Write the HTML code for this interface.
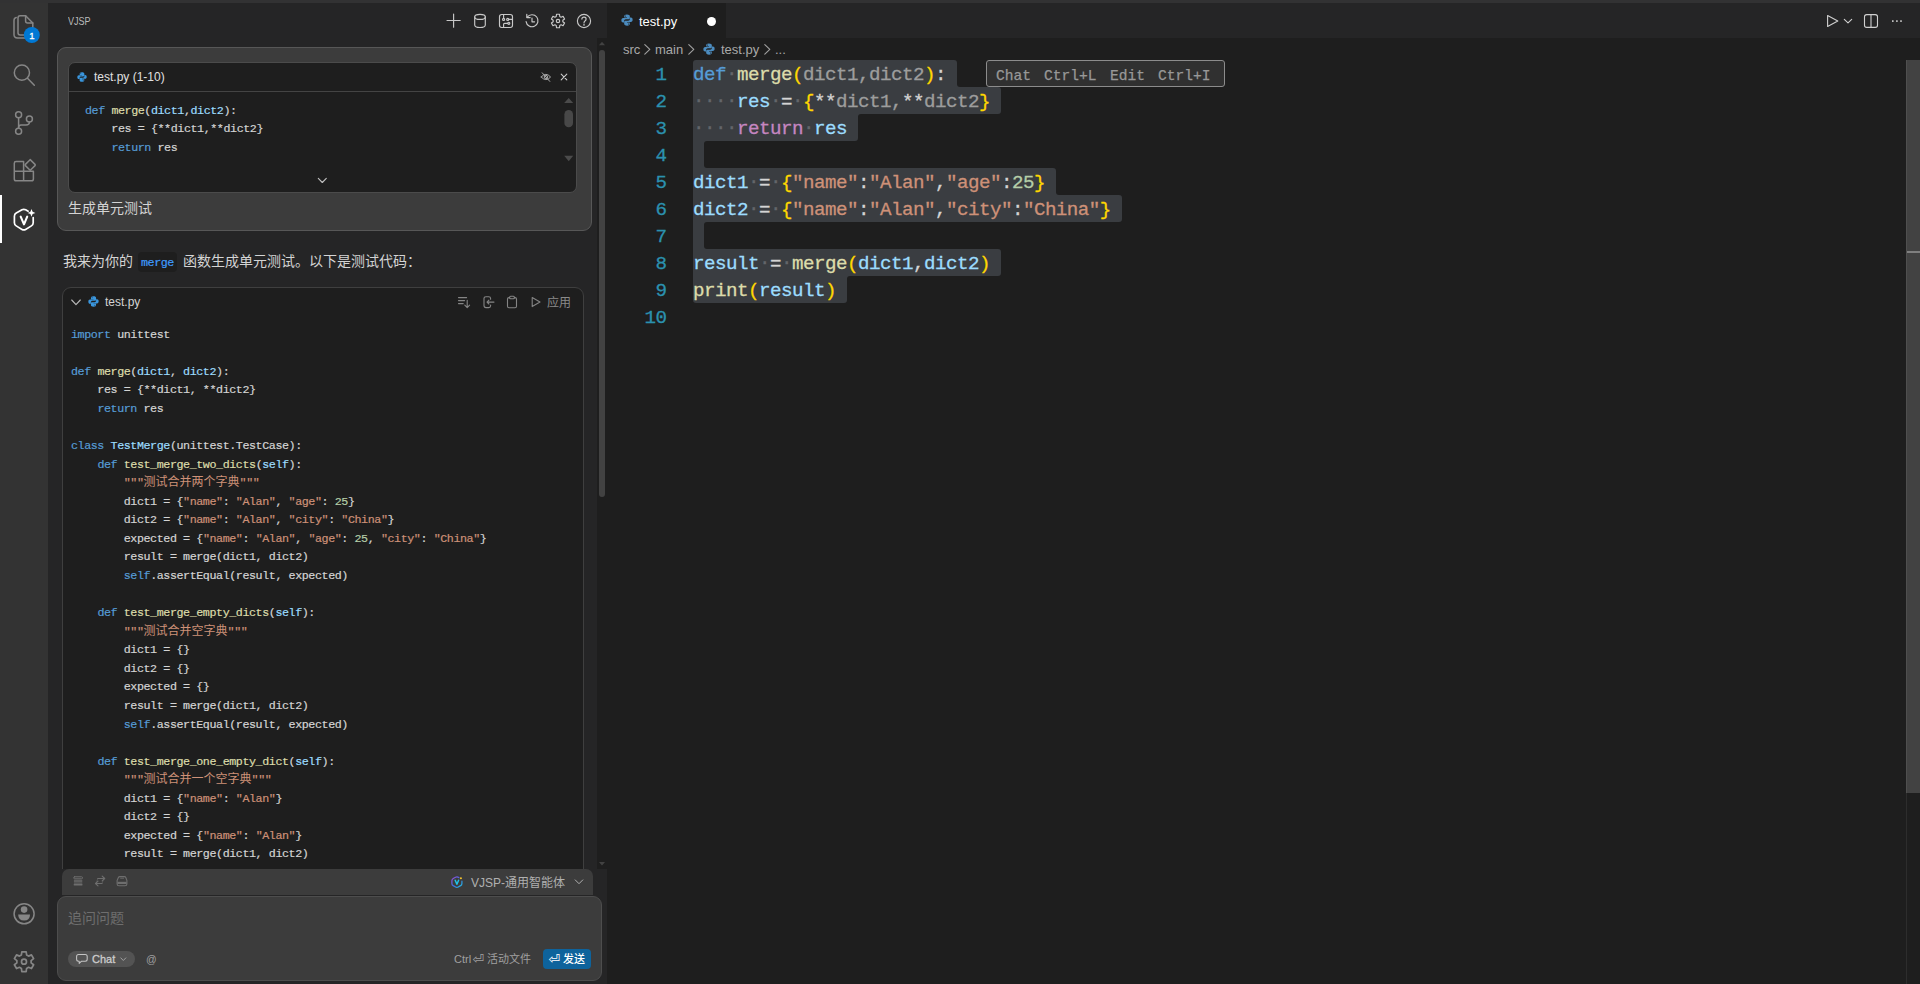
<!DOCTYPE html>
<html lang="zh-CN">
<head>
<meta charset="utf-8">
<title>test.py - VJSP</title>
<style>
*{box-sizing:border-box;margin:0;padding:0}
html,body{width:1920px;height:984px;overflow:hidden;background:#1e1e1e}
body{position:relative;font-family:"Liberation Sans","Noto Sans CJK SC",sans-serif;font-size:13px;color:#cccccc;-webkit-font-smoothing:antialiased}
.a{position:absolute}
svg{position:absolute;overflow:visible}
.t{position:absolute;white-space:pre;line-height:1}
/* frame */
#topstrip{left:0;top:0;width:1920px;height:3px;background:#323233}
#actbar{left:0;top:3px;width:48px;height:981px;background:#333333}
#side{left:48px;top:3px;width:559px;height:981px;background:#252526}
#tabs{left:607px;top:3px;width:1313px;height:35px;background:#252526}
#tab{left:607px;top:3px;width:119px;height:35px;background:#1e1e1e}
#activeind{left:0;top:195px;width:2px;height:48px;background:#ffffff}
/* editor */
.mono{font-family:"Liberation Mono","Noto Sans CJK SC",monospace}
#lnums{left:607px;top:61.5px;width:59.6px;text-align:right;color:#2b91af;font-size:19.2px;letter-spacing:-.52px;-webkit-text-stroke:.3px}
#edcode{left:693px;top:61.5px;font-size:19.2px;letter-spacing:-.52px;color:#d4d4d4;-webkit-text-stroke:.3px}
.el{height:27px;line-height:27px;white-space:pre}
.kw{color:#569cd6}.fn{color:#dcdcaa}.b1{color:#ffd700}.dim{color:#9d9d9d}.p{color:#d4d4d4}
.v{color:#9cdcfe}.ct{color:#c586c0}.s{color:#ce9178}.n{color:#b5cea8}.ws{color:#63666a;position:relative;top:-.1px}
#hint{left:986px;top:60px;width:239px;height:27px;border:1px solid #8c8c8c;border-radius:3px;background:#303030}
.hw{position:absolute;top:6.6px;font-size:14.6px;color:#989898;line-height:16px;-webkit-text-stroke:.25px}
#vscroll{left:1906px;top:60px;width:14px;height:733px;background:#424242}
#vline{left:1906px;top:60px;width:1px;height:924px;background:rgba(255,255,255,.07);z-index:3}
#vmark{left:1907px;top:251px;width:13px;height:2px;background:#7f7f7f}
/* sidebar */
#userbox{left:57px;top:47px;width:535px;height:184px;border:1px solid #575757;border-radius:9px;background:#3c3c3c}
#ctx{left:68px;top:62px;width:509px;height:131px;border:1px solid #4b4b4b;border-radius:7px;background:#1e1e1e}
#ctxsep{left:69px;top:91px;width:507px;height:1px;background:#444444}
.code12{font-size:11.7px;letter-spacing:-.42px;color:#d4d4d4;-webkit-text-stroke:.2px}
.cl{height:18.57px;line-height:18.57px;white-space:pre}
.cj{font-size:12px;letter-spacing:0;-webkit-text-stroke:0}
#strack{left:597px;top:38px;width:10px;height:831px;background:#1e1e1e}
#sthumb{left:599px;top:50px;width:6px;height:447px;background:#424242;border-radius:3px}
#pill{left:138px;top:252px;width:39px;height:20px;border-radius:4px;background:#1e1e1e}
#cblock{left:62px;top:287px;width:522px;height:600px;border:1px solid #3f3f3f;border-radius:9px;background:#1e1e1e}
#clip{left:48px;top:38px;width:559px;height:831px;overflow:hidden}
#tbar{left:62px;top:869px;width:531px;height:26px;background:#3c3c3c;border-radius:7px 7px 0 0}
#inbox{left:57px;top:896px;width:545px;height:85px;border:1px solid #4d4d4d;border-radius:9px;background:#3c3c3c}
#chatpill{left:68px;top:951px;width:67px;height:16px;border-radius:8px;background:#535353}
#send{left:543px;top:949px;width:48px;height:20px;border-radius:4px;background:#0e639c}
</style>
</head>
<body>
<div class="a" id="topstrip"></div>
<div class="a" id="actbar"></div>
<div class="a" id="side"></div>
<div class="a" id="tabs"></div>
<div class="a" id="tab"></div>
<div class="a" id="activeind"></div>

<!-- ===== editor ===== -->
<svg class="py" viewBox="0 0 16 16" width="12" height="12" style="left:621px;top:14px"><g fill="#4b8bbe"><path d="M7.9 .5C5 .5 4.3 1.7 4.3 3v1.6H8v.6H2.9C1.300 5.200 .5 6.500 .5 8.200c0 1.800 .8 3 2.400 3h1.300V9.300C4.200 8 5.200 7 6.500 7H10c1.100 0 1.800-.8 1.800-1.800V3C11.800 1.500 10.500 .5 7.900 .5zM6 1.900a.7 .7 0 110 1.400 .7 .7 0 010-1.400z"/><path transform="rotate(180 8 8)" d="M7.9 .5C5 .5 4.3 1.7 4.3 3v1.6H8v.6H2.9C1.300 5.200 .5 6.500 .5 8.200c0 1.800 .8 3 2.400 3h1.300V9.300C4.200 8 5.200 7 6.500 7H10c1.100 0 1.800-.8 1.800-1.800V3C11.800 1.500 10.500 .5 7.900 .5zM6 1.900a.7 .7 0 110 1.400 .7 .7 0 010-1.400z"/></g></svg>
<div class="t" style="left:639px;top:14.8px;font-size:13px;color:#ffffff">test.py</div>
<div class="a" style="left:707px;top:16.5px;width:9px;height:9px;border-radius:50%;background:#ffffff"></div>

<div class="t" id="bc" style="left:623px;top:43px;font-size:13px;color:#a9a9a9">src</div>
<div class="t" style="left:655px;top:43px;font-size:13px;color:#a9a9a9">main</div>
<svg class="py" viewBox="0 0 16 16" width="12" height="12" style="left:703px;top:43px"><g fill="#4b8bbe"><path d="M7.9 .5C5 .5 4.3 1.7 4.3 3v1.6H8v.6H2.9C1.300 5.200 .5 6.500 .5 8.200c0 1.800 .8 3 2.400 3h1.300V9.300C4.200 8 5.200 7 6.500 7H10c1.100 0 1.800-.8 1.800-1.800V3C11.800 1.500 10.500 .5 7.900 .5zM6 1.900a.7 .7 0 110 1.400 .7 .7 0 010-1.400z"/><path transform="rotate(180 8 8)" d="M7.9 .5C5 .5 4.3 1.7 4.3 3v1.6H8v.6H2.9C1.300 5.200 .5 6.500 .5 8.200c0 1.800 .8 3 2.400 3h1.300V9.300C4.200 8 5.200 7 6.500 7H10c1.100 0 1.800-.8 1.800-1.800V3C11.800 1.500 10.500 .5 7.900 .5zM6 1.900a.7 .7 0 110 1.400 .7 .7 0 010-1.400z"/></g></svg>
<div class="t" style="left:721px;top:43px;font-size:13px;color:#a9a9a9">test.py</div>
<div class="t" style="left:775px;top:43px;font-size:13px;color:#a9a9a9">...</div>

<svg style="left:0;top:0" width="1920" height="984"><path d="M693.00 63.00 Q693.00 60.00 696.00 60.00 L954.00 60.00 Q957.00 60.00 957.00 63.00 L957.00 84.00 Q957.00 87.00 960.00 87.00 L998.00 87.00 Q1001.00 87.00 1001.00 90.00 L1001.00 111.00 Q1001.00 114.00 998.00 114.00 L861.00 114.00 Q858.00 114.00 858.00 117.00 L858.00 138.00 Q858.00 141.00 855.00 141.00 L707.00 141.00 Q704.00 141.00 704.00 144.00 L704.00 165.00 Q704.00 168.00 707.00 168.00 L1053.00 168.00 Q1056.00 168.00 1056.00 171.00 L1056.00 192.00 Q1056.00 195.00 1059.00 195.00 L1119.00 195.00 Q1122.00 195.00 1122.00 198.00 L1122.00 219.00 Q1122.00 222.00 1119.00 222.00 L707.00 222.00 Q704.00 222.00 704.00 225.00 L704.00 246.00 Q704.00 249.00 707.00 249.00 L998.00 249.00 Q1001.00 249.00 1001.00 252.00 L1001.00 273.00 Q1001.00 276.00 998.00 276.00 L850.00 276.00 Q847.00 276.00 847.00 279.00 L847.00 300.00 Q847.00 303.00 844.00 303.00 L696.00 303.00 Q693.00 303.00 693.00 300.00 Z" fill="#3a3d41"/></svg>
<div class="a mono" id="lnums">
<div class="el">1</div>
<div class="el">2</div>
<div class="el">3</div>
<div class="el">4</div>
<div class="el">5</div>
<div class="el">6</div>
<div class="el">7</div>
<div class="el">8</div>
<div class="el">9</div>
<div class="el">10</div>
</div>
<div class="a mono" id="edcode">
<div class="el"><span class="kw">def</span><span class="ws">·</span><span class="fn">merge</span><span class="b1">(</span><span class="dim">dict1,dict2</span><span class="b1">)</span><span class="p">:</span></div>
<div class="el"><span class="ws">····</span><span class="v">res</span><span class="ws">·</span><span class="p">=</span><span class="ws">·</span><span class="b1">{</span><span class="p">**</span><span class="dim">dict1,</span><span class="p">**</span><span class="dim">dict2</span><span class="b1">}</span></div>
<div class="el"><span class="ws">····</span><span class="ct">return</span><span class="ws">·</span><span class="v">res</span></div>
<div class="el"></div>
<div class="el"><span class="v">dict1</span><span class="ws">·</span><span class="p">=</span><span class="ws">·</span><span class="b1">{</span><span class="s">"name"</span><span class="p">:</span><span class="s">"Alan"</span><span class="p">,</span><span class="s">"age"</span><span class="p">:</span><span class="n">25</span><span class="b1">}</span></div>
<div class="el"><span class="v">dict2</span><span class="ws">·</span><span class="p">=</span><span class="ws">·</span><span class="b1">{</span><span class="s">"name"</span><span class="p">:</span><span class="s">"Alan"</span><span class="p">,</span><span class="s">"city"</span><span class="p">:</span><span class="s">"China"</span><span class="b1">}</span></div>
<div class="el"></div>
<div class="el"><span class="v">result</span><span class="ws">·</span><span class="p">=</span><span class="ws">·</span><span class="fn">merge</span><span class="b1">(</span><span class="v">dict1</span><span class="p">,</span><span class="v">dict2</span><span class="b1">)</span></div>
<div class="el"><span class="fn">print</span><span class="b1">(</span><span class="v">result</span><span class="b1">)</span></div>
<div class="el"></div>
</div>
<div class="a mono" id="hint"><span class="hw" style="left:9px">Chat</span><span class="hw" style="left:57px">Ctrl+L</span><span class="hw" style="left:123px">Edit</span><span class="hw" style="left:171px">Ctrl+I</span></div>
<div class="a" id="vline"></div>
<div class="a" id="vscroll"></div>
<div class="a" id="vmark"></div>

<!-- ===== sidebar ===== -->
<div class="t" style="left:68px;top:16px;font-size:11px;color:#bbbbbb;transform:scaleX(.82);transform-origin:0 0">VJSP</div>
<div class="a" id="strack"></div>
<div class="a" id="sthumb"></div>

<div class="a" id="clip">
<div class="a" id="userbox" style="left:9px;top:9px"></div>
<div class="a" id="ctx" style="left:20px;top:24px"></div>
<div class="a" id="ctxsep" style="left:21px;top:53px"></div>
<div class="a" id="pill" style="left:90px;top:214px"></div>
<div class="a" id="cblock" style="left:14px;top:249px"></div>
</div>

<svg class="py" viewBox="0 0 16 16" width="10" height="10" style="left:77px;top:72px"><g fill="#3a96dd"><path d="M7.9 .5C5 .5 4.3 1.7 4.3 3v1.6H8v.6H2.9C1.300 5.200 .5 6.500 .5 8.200c0 1.800 .8 3 2.400 3h1.300V9.300C4.200 8 5.200 7 6.500 7H10c1.100 0 1.800-.8 1.800-1.800V3C11.800 1.500 10.500 .5 7.900 .5zM6 1.900a.7 .7 0 110 1.400 .7 .7 0 010-1.400z"/><path transform="rotate(180 8 8)" d="M7.9 .5C5 .5 4.3 1.7 4.3 3v1.6H8v.6H2.9C1.300 5.200 .5 6.500 .5 8.200c0 1.800 .8 3 2.400 3h1.300V9.300C4.200 8 5.200 7 6.500 7H10c1.100 0 1.800-.8 1.800-1.800V3C11.800 1.500 10.500 .5 7.900 .5zM6 1.900a.7 .7 0 110 1.400 .7 .7 0 010-1.400z"/></g></svg>
<div class="t" style="left:94px;top:71px;font-size:12px;color:#e0e0e0">test.py (1-10)</div>
<div class="a mono code12" style="left:85px;top:101.5px">
<div class="cl"><span class="kw">def</span> <span class="fn">merge</span>(<span class="v">dict1</span>,<span class="v">dict2</span>):</div>
<div class="cl">    res = {**dict1,**dict2}</div>
<div class="cl">    <span class="kw">return</span> res</div>
</div>
<div class="t" style="left:68px;top:200px;font-size:14px;color:#d4d4d4;line-height:16px">生成单元测试</div>

<div class="t" style="left:63px;top:252px;font-size:14px;color:#d4d4d4;line-height:18px">我来为你的</div>
<div class="t mono" style="left:141px;top:257px;font-size:11.7px;letter-spacing:-.42px;color:#3f9bff;line-height:12px;-webkit-text-stroke:.2px">merge</div>
<div class="t" style="left:183px;top:252px;font-size:14px;color:#d4d4d4;line-height:18px">函数生成单元测试。以下是测试代码：</div>

<svg class="py" viewBox="0 0 16 16" width="11" height="11" style="left:88px;top:296px"><g fill="#3a96dd"><path d="M7.9 .5C5 .5 4.3 1.7 4.3 3v1.6H8v.6H2.9C1.300 5.200 .5 6.500 .5 8.200c0 1.800 .8 3 2.400 3h1.300V9.300C4.200 8 5.200 7 6.500 7H10c1.100 0 1.800-.8 1.800-1.800V3C11.800 1.500 10.500 .5 7.900 .5zM6 1.900a.7 .7 0 110 1.400 .7 .7 0 010-1.400z"/><path transform="rotate(180 8 8)" d="M7.9 .5C5 .5 4.3 1.7 4.3 3v1.6H8v.6H2.9C1.300 5.200 .5 6.500 .5 8.200c0 1.800 .8 3 2.400 3h1.300V9.300C4.200 8 5.200 7 6.500 7H10c1.100 0 1.800-.8 1.800-1.800V3C11.800 1.500 10.500 .5 7.900 .5zM6 1.900a.7 .7 0 110 1.400 .7 .7 0 010-1.400z"/></g></svg>
<div class="t" style="left:105px;top:296px;font-size:12px;color:#d4d4d4">test.py</div>
<div class="t" style="left:547px;top:296.8px;font-size:12px;color:#8a8a8a">应用</div>
<div class="a" style="left:48px;top:38px;width:549px;height:829.6px;overflow:hidden">
<div class="a mono code12" style="left:23px;top:287.7px">
<div class="cl"><span class="kw">import</span> unittest</div>
<div class="cl">&nbsp;</div>
<div class="cl"><span class="kw">def</span> <span class="fn">merge</span>(<span class="v">dict1</span>, <span class="v">dict2</span>):</div>
<div class="cl">    res = {**dict1, **dict2}</div>
<div class="cl">    <span class="kw">return</span> res</div>
<div class="cl">&nbsp;</div>
<div class="cl"><span class="kw">class</span> <span class="v">TestMerge</span>(unittest.TestCase):</div>
<div class="cl">    <span class="kw">def</span> <span class="fn">test_merge_two_dicts</span>(<span class="v">self</span>):</div>
<div class="cl">        <span class="s">&quot;&quot;&quot;<span class="cj">测试合并两个字典</span>&quot;&quot;&quot;</span></div>
<div class="cl">        dict1 = {<span class="s">"name"</span>: <span class="s">"Alan"</span>, <span class="s">"age"</span>: <span class="n">25</span>}</div>
<div class="cl">        dict2 = {<span class="s">"name"</span>: <span class="s">"Alan"</span>, <span class="s">"city"</span>: <span class="s">"China"</span>}</div>
<div class="cl">        expected = {<span class="s">"name"</span>: <span class="s">"Alan"</span>, <span class="s">"age"</span>: <span class="n">25</span>, <span class="s">"city"</span>: <span class="s">"China"</span>}</div>
<div class="cl">        result = merge(dict1, dict2)</div>
<div class="cl">        <span class="kw">self</span>.assertEqual(result, expected)</div>
<div class="cl">&nbsp;</div>
<div class="cl">    <span class="kw">def</span> <span class="fn">test_merge_empty_dicts</span>(<span class="v">self</span>):</div>
<div class="cl">        <span class="s">&quot;&quot;&quot;<span class="cj">测试合并空字典</span>&quot;&quot;&quot;</span></div>
<div class="cl">        dict1 = {}</div>
<div class="cl">        dict2 = {}</div>
<div class="cl">        expected = {}</div>
<div class="cl">        result = merge(dict1, dict2)</div>
<div class="cl">        <span class="kw">self</span>.assertEqual(result, expected)</div>
<div class="cl">&nbsp;</div>
<div class="cl">    <span class="kw">def</span> <span class="fn">test_merge_one_empty_dict</span>(<span class="v">self</span>):</div>
<div class="cl">        <span class="s">&quot;&quot;&quot;<span class="cj">测试合并一个空字典</span>&quot;&quot;&quot;</span></div>
<div class="cl">        dict1 = {<span class="s">"name"</span>: <span class="s">"Alan"</span>}</div>
<div class="cl">        dict2 = {}</div>
<div class="cl">        expected = {<span class="s">"name"</span>: <span class="s">"Alan"</span>}</div>
<div class="cl">        result = merge(dict1, dict2)</div>
<div class="cl">        <span class="kw">self</span>.assertEqual(result, expected)</div>
</div>
</div>

<div class="a" id="tbar"></div>
<div class="a" id="inbox"></div>
<div class="t" style="left:471px;top:876.8px;font-size:12px;color:#b0b0b0">VJSP-通用智能体</div>
<div class="t" style="left:68px;top:910px;font-size:14px;color:#6e6e6e;line-height:16px">追问问题</div>
<div class="a" id="chatpill"></div>
<div class="t" style="left:92px;top:953.5px;font-size:11px;color:#cccccc;-webkit-text-stroke:.3px #cccccc">Chat</div>
<div class="t" style="left:146px;top:954px;font-size:10.5px;color:#a0a0a0">@</div>
<div class="t" style="left:454px;top:954px;font-size:11px;color:#a0a0a0">Ctrl</div>
<div class="t" style="left:472.5px;top:952px;font-size:14px;color:#a0a0a0;font-family:'DejaVu Sans',sans-serif">⏎</div>
<div class="t" style="left:487px;top:954px;font-size:11px;color:#a0a0a0">活动文件</div>
<div class="a" id="send"></div>
<div class="t" style="left:548.5px;top:952px;font-size:14px;color:#ffffff;font-family:'DejaVu Sans',sans-serif">⏎</div>
<div class="t" style="left:563px;top:953.5px;font-size:11px;color:#ffffff;font-weight:500">发送</div>

<svg style="left:0;top:0" width="1920" height="984">
<g fill="none" stroke="#868686" stroke-width="1.5" stroke-linejoin="round" stroke-linecap="round">
<path d="M25.6 15.8 H20.2 Q18 15.8 18 18 V32.8 Q18 35 20.2 35 H30.6 Q32.8 35 32.8 32.8 V23 Z"/>
<path d="M25.6 15.8 V21 Q25.6 23 27.6 23 H32.8"/>
<path d="M16.2 17.6 Q14 18 14 20.6 V34.6 Q14 38 17.4 38 H28.6 Q30.4 38 30.8 36.6"/>
<circle cx="21.9" cy="72.7" r="7.6"/><path d="M27.5 78.3 L34.3 85.2"/>
<circle cx="18.6" cy="114.7" r="3"/><circle cx="18.6" cy="131.2" r="3"/><circle cx="29.4" cy="119" r="3"/>
<path d="M18.6 117.7 V128.2"/><path d="M29.4 122 Q29.4 125 26 125 H21 Q18.6 125 18.6 127.5"/>
<path d="M23.6 161.6 H16 Q14.3 161.6 14.3 163.3 V179 Q14.3 180.8 16 180.8 H31.6 Q33.4 180.8 33.4 179 V171.3 H14.3 M23.6 161.6 V180.8"/>
<path d="M30.2 159.6 L35 164.4 Q35.6 165 35 165.6 L30.8 169.8 Q30.2 170.4 29.600 169.8 L25.4 165.6 Q24.8 165 25.4 164.4 L29.600 160.2 Q30.200 159.6 30.8 160.2"/>
</g>
<circle cx="31.8" cy="35" r="8" fill="#0078d4"/>
<g fill="none" stroke="#ffffff" stroke-width="1.7" stroke-linejoin="round" stroke-linecap="round">
<path d="M28.20 211.20 L25.64 209.81 Q23.80 208.80 21.97 209.83 L16.23 213.07 Q14.40 214.10 14.40 216.20 L14.40 222.70 Q14.40 224.80 16.20 225.89 L22.00 229.41 Q23.80 230.50 25.60 229.41 L31.40 225.89 Q33.20 224.80 33.20 222.70 L33.20 217.60"/>
<path d="M20.7 216.6 L24 224.4 L27.2 216.600" stroke-width="2.1"/>
</g>
<path d="M31.5 209 L32.600 211.800 L35.4 212.900 L32.600 214 L31.5 216.8 L30.400 214 L27.6 212.900 L30.400 211.800 Z" fill="#ffffff"/>
<circle cx="24.1" cy="913.8" r="10" fill="none" stroke="#868686" stroke-width="1.5"/>
<circle cx="24.1" cy="909.6" r="3.3" fill="#868686"/>
<path d="M18.2 914.6 H30 Q30 920.6 24.1 920.6 Q18.2 920.6 18.2 914.6Z" fill="#868686"/>
<path d="M21.41 954.98 L21.82 951.84 L26.18 951.84 L26.59 954.98 L28.53 956.10 L31.45 954.88 L33.63 958.66 L31.11 960.58 L31.11 962.82 L33.63 964.74 L31.45 968.52 L28.53 967.30 L26.59 968.42 L26.18 971.56 L21.82 971.56 L21.41 968.42 L19.47 967.30 L16.55 968.52 L14.37 964.74 L16.89 962.82 L16.89 960.58 L14.37 958.66 L16.55 954.88 L19.47 956.10Z" fill="none" stroke="#868686" stroke-width="1.7" stroke-linejoin="round"/><circle cx="24" cy="961.7" r="2.5" fill="none" stroke="#868686" stroke-width="1.7"/>
<g fill="none" stroke="#c8c8c8" stroke-width="1.15" stroke-linecap="round" stroke-linejoin="round">
<path d="M447 20.5 H460.2 M453.6 14 V27.200"/>
<ellipse cx="480" cy="16.900" rx="5.300" ry="2.500"/><path d="M474.7 16.900 V25 Q474.7 27.500 480 27.500 Q485.3 27.500 485.3 25 V16.900"/>
<rect x="499.5" y="14.500" width="13" height="13" rx="2.200"/>
<circle cx="503.6" cy="19.400" r="1.05"/><circle cx="507.7" cy="19.400" r="1.05"/><circle cx="508.8" cy="23.300" r="1.05"/>
<path d="M503.6 14.500 V18.3 M508.8 19.400 H512.500 M503.6 27.500 V24.300 Q503.600 23.300 504.600 23.300 H507.700"/>
<path d="M527.2 17.200 A6 6 0 1 1 526.100 21.600"/><path d="M526.800 14.200 V17.600 H530.2"/><path d="M532 18.100 V21.800 H534.600"/>
<circle cx="584" cy="21" r="6.600"/><path d="M581.900 19.100 Q581.900 17.100 584 17.100 Q586.100 17.100 586.100 19 Q586.100 20.300 585 21 Q584 21.700 584 22.900"/>
</g>
<circle cx="584" cy="24.900" r="0.800" fill="#c8c8c8"/>
<path d="M556.24 16.43 L556.51 14.26 L559.49 14.26 L559.76 16.43 L561.08 17.19 L563.09 16.34 L564.58 18.92 L562.84 20.24 L562.84 21.76 L564.58 23.08 L563.09 25.66 L561.08 24.81 L559.76 25.57 L559.49 27.74 L556.51 27.74 L556.24 25.57 L554.92 24.81 L552.91 25.66 L551.42 23.08 L553.16 21.76 L553.16 20.24 L551.42 18.92 L552.91 16.34 L554.92 17.19Z" fill="none" stroke="#c8c8c8" stroke-width="1.15" stroke-linejoin="round"/><circle cx="558" cy="21" r="1.7" fill="none" stroke="#c8c8c8" stroke-width="1.15"/>
<g fill="none" stroke="#d0d0d0" stroke-width="1.1" stroke-linecap="round" stroke-linejoin="round">
<path d="M1827.6 15.600 V26.400 L1837.8 21 Z"/>
<path d="M1844.3 19.300 L1848 22.800 L1851.7 19.300"/>
<rect x="1864.5" y="14.600" width="13" height="12.800" rx="2.200"/><path d="M1871 14.600 V27.400"/>
</g>
<rect x="1892.0" y="20.300" width="1.6" height="1.600" fill="#d0d0d0"/>
<rect x="1896.1" y="20.300" width="1.6" height="1.600" fill="#d0d0d0"/>
<rect x="1900.2" y="20.300" width="1.6" height="1.600" fill="#d0d0d0"/>
<path d="M644.80 44.70 L649.80 49.40 L644.80 54.10" fill="none" stroke="#a0a0a0" stroke-width="1.15" stroke-linecap="round" stroke-linejoin="round"/>
<path d="M688.80 44.70 L693.80 49.40 L688.80 54.10" fill="none" stroke="#a0a0a0" stroke-width="1.15" stroke-linecap="round" stroke-linejoin="round"/>
<path d="M764.80 44.70 L769.80 49.40 L764.80 54.10" fill="none" stroke="#a0a0a0" stroke-width="1.15" stroke-linecap="round" stroke-linejoin="round"/>
<g fill="none" stroke="#a8a8a8" stroke-width="1" stroke-linecap="round" stroke-linejoin="round">
<path d="M541.2 77 Q545.9 71.600 550.6 77 Q545.900 82.400 541.200 77Z"/><circle cx="545.9" cy="77" r="1.7"/><path d="M542.2 72.800 L549.8 81.400"/>
<path d="M561.2 74.200 L566.8 79.800 M566.8 74.200 L561.2 79.800" stroke-width="1.1" stroke="#cccccc"/>
</g>
<path d="M564.2 103 L568.7 98 L573.2 103Z" fill="#4b4b4b"/>
<rect x="564.4" y="110" width="8.6" height="17.300" rx="4.300" fill="#484848"/>
<path d="M564.2 155.800 L568.7 161.300 L573.2 155.800Z" fill="#4b4b4b"/>
<path d="M318.30 178.30 L322.30 182.50 L326.30 178.30" fill="none" stroke="#c0c0c0" stroke-width="1.1" stroke-linecap="round" stroke-linejoin="round"/>
<path d="M599 45.300 L602 41.800 L605 45.300Z" fill="#424242"/>
<path d="M599 862 L602 865.500 L605 862Z" fill="#424242"/>
<path d="M71.70 300.00 L76.00 304.60 L80.30 300.00" fill="none" stroke="#b8b8b8" stroke-width="1.15" stroke-linecap="round" stroke-linejoin="round"/>
<g fill="none" stroke="#858585" stroke-width="1.1" stroke-linecap="round" stroke-linejoin="round">
<path d="M458.5 297.600 H466.600 M458.5 300.600 H464.600 M458.5 303.600 H463.2"/><path d="M467.2 300.2 V307.400 M464.800 305.200 L467.200 307.600 L469.600 305.200"/>
<path d="M490.6 299.2 V298.600 Q490.600 296.700 488.700 296.700 H486 Q484 296.700 484 298.600 V305.600 Q484 307.600 486 307.600 H488.700 Q490.600 307.600 490.600 305.700 V305"/><path d="M494 302.100 H487 M488.900 300.200 L487 302.100 L488.900 304"/>
<path d="M509.6 297.600 H509 Q507.500 297.600 507.500 299.100 V306.300 Q507.500 307.800 509 307.800 H515 Q516.500 307.800 516.500 306.300 V299.100 Q516.500 297.600 515 297.600 H514.400"/><rect x="509.6" y="296.300" width="4.8" height="2.400" rx="1"/>
<path d="M532.2 297.600 V306.600 L540 302.100 Z"/>
</g>
<g fill="none" stroke="#6e6e6e" stroke-width="1" stroke-linecap="round" stroke-linejoin="round">
<rect x="73.7" y="876.800" width="8.800" height="2" rx="0.9"/><path d="M74.300 880.300 H81.900 M74.300 881.700 H81.900 M74.300 883.100 H81.900" stroke-width="0.9"/><path d="M74.300 884.800 H81.900" stroke-width="1.500"/>
<path d="M97.800 878.500 H104.400 M102.200 876.200 L104.700 878.500 L102.200 880.800 M102 883.500 H95.800 M98 881.200 L95.500 883.500 L98 885.800" stroke-width="1.150"/><path d="M97.800 878.500 L96.800 881.300 M102 883.500 L103 880.700" stroke-width="0.7" opacity="0.7"/>
<path d="M119.800 876.600 H124.400 Q125.400 876.600 125.800 877.500 L126.900 880.500 V884 Q126.900 885.800 125 885.800 H119 Q117.100 885.800 117.100 884 V880.500 L118.400 877.500 Q118.800 876.600 119.800 876.600Z" stroke-width="1.100"/><path d="M117.400 882.900 H126.600" stroke-width="2.200" stroke-linecap="butt"/><path d="M120.600 878.200 H123.600" stroke-width="0.9"/>
</g>
<defs><linearGradient id="vg" x1="0" y1="0" x2="1" y2="1"><stop offset="0" stop-color="#a04bd8"/><stop offset="0.5" stop-color="#3b6fe0"/><stop offset="1" stop-color="#21c1e6"/></linearGradient></defs>
<path d="M459.00 877.70 L457.95 877.10 Q456.90 876.50 455.59 877.23 L453.21 878.57 Q451.90 879.30 451.90 880.80 L451.90 883.40 Q451.90 884.90 453.20 885.65 L455.60 887.05 Q456.90 887.80 458.20 887.05 L460.60 885.65 Q461.90 884.90 461.90 883.40 L461.90 881.20" fill="none" stroke="url(#vg)" stroke-width="1.25" stroke-linejoin="round" stroke-linecap="round"/>
<path d="M455.200 880.300 L456.900 884.300 L458.600 880.300" fill="none" stroke="#21c1e6" stroke-width="1.5" stroke-linejoin="round" stroke-linecap="round"/>
<circle cx="460.900" cy="878.300" r="1.05" fill="#f2c12e"/>
<path d="M575.20 879.90 L579.00 883.70 L582.80 879.90" fill="none" stroke="#b0b0b0" stroke-width="1.0" stroke-linecap="round" stroke-linejoin="round"/>
<path d="M78.600 954.500 H85.200 Q87.200 954.500 87.200 956.500 V959.200 Q87.200 961.200 85.200 961.200 H81.600 L79.200 963.400 V961.200 H78.600 Q76.600 961.200 76.600 959.200 V956.500 Q76.600 954.500 78.600 954.500Z" fill="none" stroke="#c4c4c4" stroke-width="1.050" stroke-linejoin="round"/>
<path d="M120.80 957.90 L123.30 960.50 L125.80 957.90" fill="none" stroke="#a0a0a0" stroke-width="1" stroke-linecap="round" stroke-linejoin="round"/>
</svg>
<div class="t" style="left:29.2px;top:30.6px;font-size:9.5px;color:#fff;line-height:9.5px;-webkit-text-stroke:.3px #fff">1</div>
</body>
</html>
